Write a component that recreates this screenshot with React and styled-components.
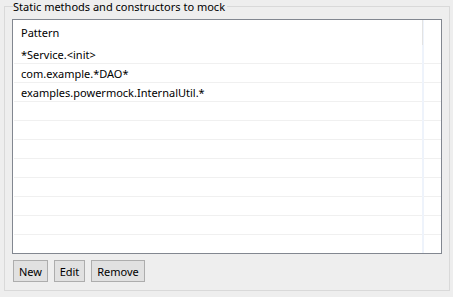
import React from 'react'
import styled, { createGlobalStyle } from 'styled-components'

const GlobalStyle = createGlobalStyle`
  html, body {
    margin: 0;
    padding: 0;
    background: #eeeeee;
  }
  body {
    font-family: 'Noto Sans', 'Open Sans', sans-serif;
    font-size: 11px;
    color: #000;
  }
`

const Page = styled.div`
  width: 453px;
  height: 297px;
  padding: 6px 0 0 4px;
  box-sizing: border-box;
`

const Group = styled.section`
  width: 446px;
  height: 285px;
  box-sizing: border-box;
  border: 1px solid #d9d9d9;
  padding: 0 7px 7px 7px;
  display: flex;
  flex-direction: column;
`

const Title = styled.div`
  align-self: flex-start;
  margin: -7px 0 0 1px;
  padding: 0 2px 0 0;
  height: 14px;
  line-height: 14px;
  background: #eeeeee;
  white-space: nowrap;
`

const Table = styled.div`
  position: relative;
  margin-top: 5px;
  background: #fff;
  border: 1px solid #828790;
  height: 235px;
  box-sizing: border-box;
  overflow: hidden;
`

const Header = styled.div`
  height: 25px;
  display: flex;
  align-items: center;
  padding-left: 8px;
`

const Row = styled.div`
  height: 19px;
  box-sizing: border-box;
  border-bottom: 1px solid #f0f0f0;
  margin-left: 1px;
  padding-left: 7px;
  display: flex;
  align-items: center;
`

const Divider = styled.div`
  position: absolute;
  top: 0;
  bottom: 0;
  left: 409px;
  width: 2px;
  background: #eef3fb;

  &::before {
    content: '';
    position: absolute;
    top: 0;
    left: 0;
    width: 1px;
    height: 25px;
    background: #e3e3e3;
  }
`

const Buttons = styled.div`
  display: flex;
  gap: 6px;
  margin-top: 6px;
  padding-left: 1px;
`

const Button = styled.button`
  width: ${p => p.$w}px;
  height: 22px;
  padding: 0;
  border: 1px solid #adadad;
  background: #e1e1e1;
  font-family: inherit;
  font-size: 11px;
  color: #000;
  box-sizing: border-box;
`

const rows = [
  '*Service.<init>',
  'com.example.*DAO*',
  'examples.powermock.InternalUtil.*',
  '', '', '', '', '', '', '', '',
]

export default function App() {
  return (
    <>
      <GlobalStyle />
      <Page>
        <Group>
          <Title>Static methods and constructors to mock</Title>
          <Table>
            <Header>Pattern</Header>
            {rows.map((r, i) => (
              <Row key={i}>{r}</Row>
            ))}
            <Divider />
          </Table>
          <Buttons>
            <Button $w={35}>New</Button>
            <Button $w={31}>Edit</Button>
            <Button $w={54}>Remove</Button>
          </Buttons>
        </Group>
      </Page>
    </>
  )
}
